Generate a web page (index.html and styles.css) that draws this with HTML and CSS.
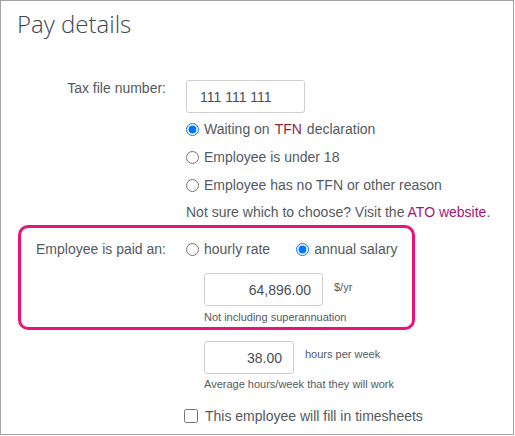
FILE: index.html
```html
<!DOCTYPE html>
<html lang="en">
<head>
    <meta charset="UTF-8">
    <meta name="viewport" content="width=device-width, initial-scale=1.0">
    <title>Pay details</title>
    <link rel="stylesheet" href="styles.css">
</head>
<body>
    <div class="panel">
        <h1>Pay details</h1>

        <div class="field tfn-field">
            <label class="field-label" for="tfn">Tax file number:</label>
            <div class="field-body">
                <input class="text-input tfn-input" id="tfn" type="text" value="111 111 111">
                <div class="choices">
                    <label class="choice"><input type="radio" name="tfnStatus" checked> Waiting on <span class="abbr">TFN</span> declaration</label>
                    <label class="choice"><input type="radio" name="tfnStatus"> Employee is under 18</label>
                    <label class="choice"><input type="radio" name="tfnStatus"> Employee has no TFN or other reason</label>
                </div>
                <div class="hint-line">Not sure which to choose? Visit the <a href="#" class="link">ATO website</a>.</div>
            </div>
        </div>

        <!-- highlighted block -->
        <div class="pay-box">
            <div class="field pay-field">
                <div class="field-label pay-label">Employee is paid an:</div>
                <div class="field-body">
                    <div class="pay-type">
                        <label class="choice inline"><input type="radio" name="payType"> hourly rate</label>
                        <label class="choice inline"><input type="radio" name="payType" checked> annual salary</label>
                    </div>
                    <div class="amount">
                        <div class="amount-row">
                            <input class="text-input num-input salary-input" type="text" value="64,896.00">
                            <span class="unit">$/yr</span>
                        </div>
                        <div class="small-note">Not including superannuation</div>
                    </div>
                </div>
            </div>
        </div>

        <div class="field hours-field">
            <div class="field-label"></div>
            <div class="field-body">
                <div class="amount">
                    <div class="amount-row">
                        <input class="text-input num-input hours-input" type="text" value="38.00">
                        <span class="unit hours-unit">hours per week</span>
                    </div>
                    <div class="small-note">Average hours/week that they will work</div>
                </div>
                <label class="check-row"><input type="checkbox"> This employee will fill in timesheets</label>
            </div>
        </div>
    </div>
</body>
</html>
```

FILE: styles.css
```css
body {
    margin: 0;
    font-family: "Liberation Sans", Arial, sans-serif;
    font-size: 14px;
    color: #545a60;
    background-color: white;
}
.panel {
    width: 514px;
    height: 435px;
    box-sizing: border-box;
    border: 1px solid #a3a3a3;
    background-color: white;
    overflow: hidden;
}
h1 {
    margin: 0;
    padding: 7px 0 0 16px;
    font-family: "Open Sans", sans-serif;
    font-weight: 300;
    font-size: 24px;
    line-height: 32px;
    color: #3b4753;
}
.field {
    display: grid;
    grid-template-columns: 165px 1fr;
    column-gap: 20px;
}
.tfn-field {
    margin-top: 40px;
}
.field-label {
    text-align: right;
    line-height: 16px;
}
.text-input {
    display: block;
    box-sizing: border-box;
    height: 33px;
    border: 1px solid #cfcfcf;
    border-radius: 3px;
    padding: 0 13px;
    font-family: "Liberation Sans", Arial, sans-serif;
    font-size: 14px;
    color: #4a4f55;
    background: white;
    outline: none;
}
.tfn-input {
    width: 119px;
}
.choices {
    margin-top: 2px;
}
.choice {
    display: flex;
    align-items: center;
    gap: 5px;
    height: 28px;
}
.choice input {
    margin: 0;
    width: 13px;
    height: 13px;
}
.abbr {
    color: #8a2840;
}
.hint-line {
    line-height: 26px;
}
.link {
    color: #a3186f;
    text-decoration: none;
}
.pay-box {
    margin-left: 17px;
    width: 397px;
    box-sizing: border-box;
    border: 3px solid #e8137d;
    border-radius: 10px;
    padding: 9px 0 3px 0;
}
.pay-field {
    grid-template-columns: 145px 1fr;
}
.pay-label {
    line-height: 24px;
}
.pay-type {
    display: flex;
    gap: 26px;
}
.choice.inline {
    height: 24px;
}
.amount {
    margin-left: 18px;
}
.pay-box .amount {
    margin-top: 12px;
}
.amount-row {
    display: flex;
    align-items: flex-start;
    gap: 11px;
}
.num-input {
    text-align: right;
    padding-right: 11px;
}
.salary-input {
    width: 119px;
}
.hours-input {
    width: 90px;
}
.unit {
    font-size: 11px;
    line-height: 14px;
    padding-top: 7px;
}
.hours-unit {
    padding-top: 6px;
}
.small-note {
    margin-top: 4px;
    font-size: 11px;
    line-height: 14px;
}
.hours-field {
    margin-top: 11px;
}
.hours-field .small-note {
    margin-top: 3px;
}
.check-row {
    display: flex;
    align-items: center;
    gap: 7px;
    height: 24px;
    margin-top: 13px;
    margin-left: -2px;
    font-size: 14px;
}
.check-row input {
    margin: 0;
    width: 14px;
    height: 14px;
}
```
